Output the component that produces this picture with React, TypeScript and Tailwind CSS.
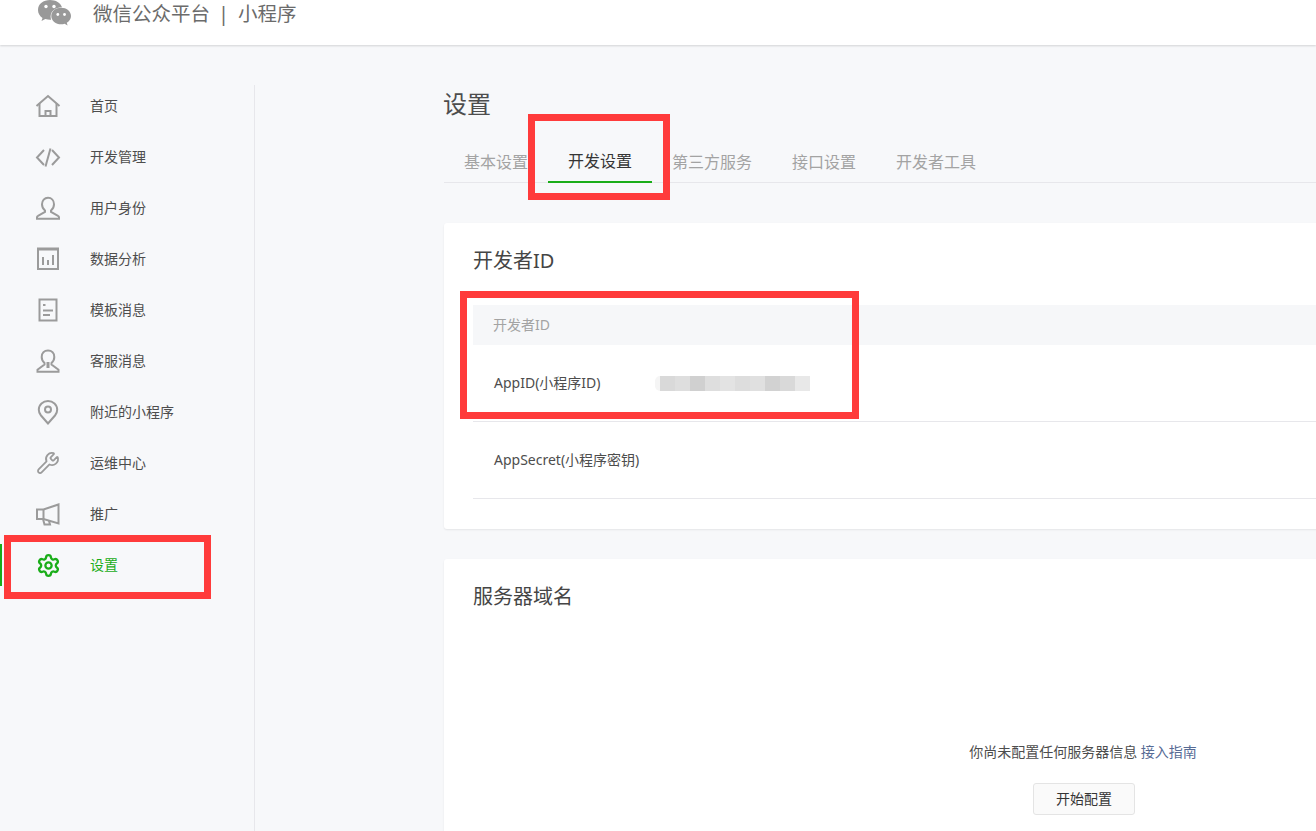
import React from "react";
import { Settings, Wrench } from "lucide-react";

const font = { fontFamily: '"Noto Sans", "Noto Sans CJK SC", sans-serif' };

const S = ({ children, color = "#9b9b9b", w = 2 }: { children: React.ReactNode; color?: string; w?: number }) => (
  <svg width="26" height="26" viewBox="0 0 26 26" fill="none" stroke={color} strokeWidth={w} strokeLinejoin="miter">
    {children}
  </svg>
);

const icons: React.ReactNode[] = [
  <S>
    <path d="M1.500 13 13 3l11.500 10" />
    <path d="M4.500 10.500V23h17V10.500" />
    <path d="M10.500 23v-5h5v5" />
  </S>,
  <S>
    <path d="M9 6 2 13.500l7 7.500" />
    <path d="M15.500 4.500 10.500 22.500" />
    <path d="M17 6l7 7.500-7 7.500" />
  </S>,
  <S>
    <path d="M10 15.500c-2-1.500-3-3.700-3-6.200C7 5.500 9.500 2.800 13 2.800s6 2.700 6 6.500c0 2.500-1 4.700-3 6.200v1.500l7 3.800c.8.400 1 .8 1 1.500v1.500H2v-1.500c0-.7.200-1.100 1-1.500l7-3.800z" />
  </S>,
  <S>
    <path d="M2 3h22" strokeWidth="3" />
    <path d="M3 3v20h20V3" />
    <path d="M8 11v8M13 14v5M18 9v10" />
  </S>,
  <S>
    <path d="M4.500 2.500h17v21h-17z" />
    <path d="M8 8h2.500M8 13.500h10M8 18h7" />
  </S>,
  <S>
    <path d="M9.500 15c-1.800-1.500-2.800-3.700-2.800-6C6.700 5 9.300 2.500 13 2.500S19.300 5 19.300 9c0 2.300-1 4.500-2.800 6v1.500l7 5.200v2H2.500v-2l7-5.200z" />
    <path d="M13 14v6" strokeWidth="3" />
  </S>,
  <S>
    <path d="M13 24.500 6 16.500C4.500 14.700 3.800 12.800 3.800 10.700 3.800 5.500 8 2 13 2s9.200 3.500 9.200 8.700c0 2.100-.7 4-2.200 5.800z" />
    <circle cx="13" cy="10.500" r="3" />
  </S>,
  <Wrench size={24} color="#9b9b9b" strokeWidth={1.8} />,
  <S>
    <path d="M2 8.500h6.500L23.500 3.500v19L8.500 18H2z" />
    <path d="M8.500 8.500V18" />
    <path d="M8 18l1.500 5.500h5.500l-1-3.800" />
  </S>,
  <Settings size={25} color="#1aad19" strokeWidth={2.2} />,
];

const menu = ["首页", "开发管理", "用户身份", "数据分析", "模板消息", "客服消息", "附近的小程序", "运维中心", "推广", "设置"];
const tabs = ["基本设置", "开发设置", "第三方服务", "接口设置", "开发者工具"];
const blurs = ["#d9d9d9", "#dedede", "#d0d0d0", "#dedede", "#e3e3e3", "#dddddd", "#e0e0e0", "#d2d2d2", "#d9d9d9", "#e8e8e8"];

const RedBox = ({ className }: { className: string }) => (
  <div className={`absolute border-[7px] border-[#ff3b3b] pointer-events-none ${className}`} />
);

export default function App() {
  return (
    <div className="relative h-[831px] w-full overflow-hidden bg-[#f7f8fa] text-[#353535]" style={font}>
      <header className="relative flex h-[45px] items-start bg-white pl-[38px] shadow-[0_1px_2px_rgba(0,0,0,0.15)]">
        <svg width="34" height="27" viewBox="0 0 34 27" className="mr-[21px]">
          <path fill="#999" d="M12 0C5.400 0 0 3.700 0 10c0 3.400 1.800 6 4.500 8L3.500 21l3.800-2c1.600.5 3.100.7 4.700.700h1.200c-.4-1-.6-2-.6-3.200 0-5.300 5-9.300 11.400-9.300C22.600 2.800 17.700 0 12 0z" />
          <path fill="#999" d="M33 16c0-4.900-4.600-8.300-9.800-8.300-5.500 0-9.900 3.500-9.900 8.300s4.400 8.300 9.900 8.300c1.200 0 2.300-.2 3.400-.6l3 1.900-.8-2.800C31.400 21.200 33 18.800 33 16z" />
          <circle cx="8" cy="6.500" r="1.700" fill="#fff" />
          <circle cx="16" cy="6.500" r="1.700" fill="#fff" />
          <circle cx="19.800" cy="14.500" r="1.400" fill="#fff" />
          <circle cx="26.500" cy="14.500" r="1.400" fill="#fff" />
        </svg>
        <span className="whitespace-nowrap text-[19.500px] leading-[28px] text-[#6b6b6b]">微信公众平台</span>
        <span className="ml-[8px] mr-[9px] text-[20px] leading-[28px] text-[#6b6b6b]">|</span>
        <span className="whitespace-nowrap text-[19.500px] leading-[28px] text-[#6b6b6b]">小程序</span>
      </header>

      <div className="flex pt-10">
        <aside className="h-[800px] w-[255px] shrink-0 border-r border-[#e7e7eb]">
          <nav>
            {menu.map((m, i) => {
              const active = i === menu.length - 1;
              return (
                <div
                  key={m}
                  className={`mb-[9px] flex h-[42px] items-center border-l-2 ${active ? "border-[#1aad19] text-[#1aad19]" : "border-transparent text-[#4d4d4d]"}`}
                >
                  <span className="ml-[33px] flex w-[26px] items-center justify-center">{icons[i]}</span>
                  <span className="ml-[29px] whitespace-nowrap pb-[1px] text-[14px] leading-none">{m}</span>
                </div>
              );
            })}
          </nav>
        </aside>

        <main className="w-[1279px] shrink-0 pl-[189px]">
          <h1 className="-ml-px text-[24px] font-normal leading-[38px] text-[#4d4d4d]">设置</h1>
          <div className="mt-[18px] flex h-[42px] w-[1090px] border-b border-[#e7e7eb]">
            {tabs.map((t, i) => (
              <div
                key={t}
                className={`-mb-px flex h-[42px] items-center whitespace-nowrap pl-5 pr-5 text-[16px] ${i === 1 ? "border-b-2 border-[#1aad19] text-[#353535]" : "pb-[1px] text-[#a3a3a3]"}`}
              >
                {t}
              </div>
            ))}
          </div>

          <section className="mt-10 w-[1279px] rounded-[3px] bg-white pb-[30px] shadow-[0_1px_2px_rgba(0,0,0,0.08)]">
            <h2 className="mb-2 h-[74px] pl-[29px] text-[20px] font-normal leading-[76px] text-[#454545]">开发者ID</h2>
            <div className="ml-[29px] w-[1220px] text-[14px]">
              <div className="flex h-10 items-center bg-[#f6f7f9] pb-[2px] pl-5 text-[#a3a3a3]">开发者ID</div>
              <div className="flex h-[77px] items-center border-b border-[#e7e7eb] pl-[21px]">
                <span className="w-[161px] pb-[2px] text-[#4d4d4d]">AppID(小程序ID)</span>
                <div className="h-[15px] w-[5px] rounded-l-[5px] bg-[#f5f5f5]" />
                <div className="flex h-[15px]">
                  {blurs.map((c, i) => (
                    <div key={i} className="h-full w-[15px]" style={{ background: c }} />
                  ))}
                </div>
              </div>
              <div className="flex h-[77px] items-center border-b border-[#e7e7eb] pb-[2px] pl-[21px] text-[#4d4d4d]">AppSecret(小程序密钥)</div>
            </div>
          </section>

          <section className="mt-[30px] h-[400px] w-[1279px] rounded-[3px] bg-white shadow-[0_1px_2px_rgba(0,0,0,0.08)]">
            <h2 className="h-[74px] pl-[29px] text-[20px] font-normal leading-[76px] text-[#454545]">服务器域名</h2>
            <div className="ml-[29px] flex w-[1220px] flex-col items-center pt-[108px] text-[14px]">
              <p className="leading-[22px] text-[#4d4d4d]">
                你尚未配置任何服务器信息 <span className="text-[#576b95]">接入指南</span>
              </p>
              <button className="ml-[2px] mt-5 h-8 w-[102px] rounded-[3px] border border-[#e4e4e4] bg-[#fafafa] pb-[2px] text-[#353535]">开始配置</button>
            </div>
          </section>
        </main>
      </div>

      <RedBox className="left-[4px] top-[535px] h-[64px] w-[207px]" />
      <RedBox className="left-[528px] top-[114px] h-[86px] w-[142px]" />
      <RedBox className="left-[460px] top-[291px] h-[128px] w-[399px]" />
    </div>
  );
}
